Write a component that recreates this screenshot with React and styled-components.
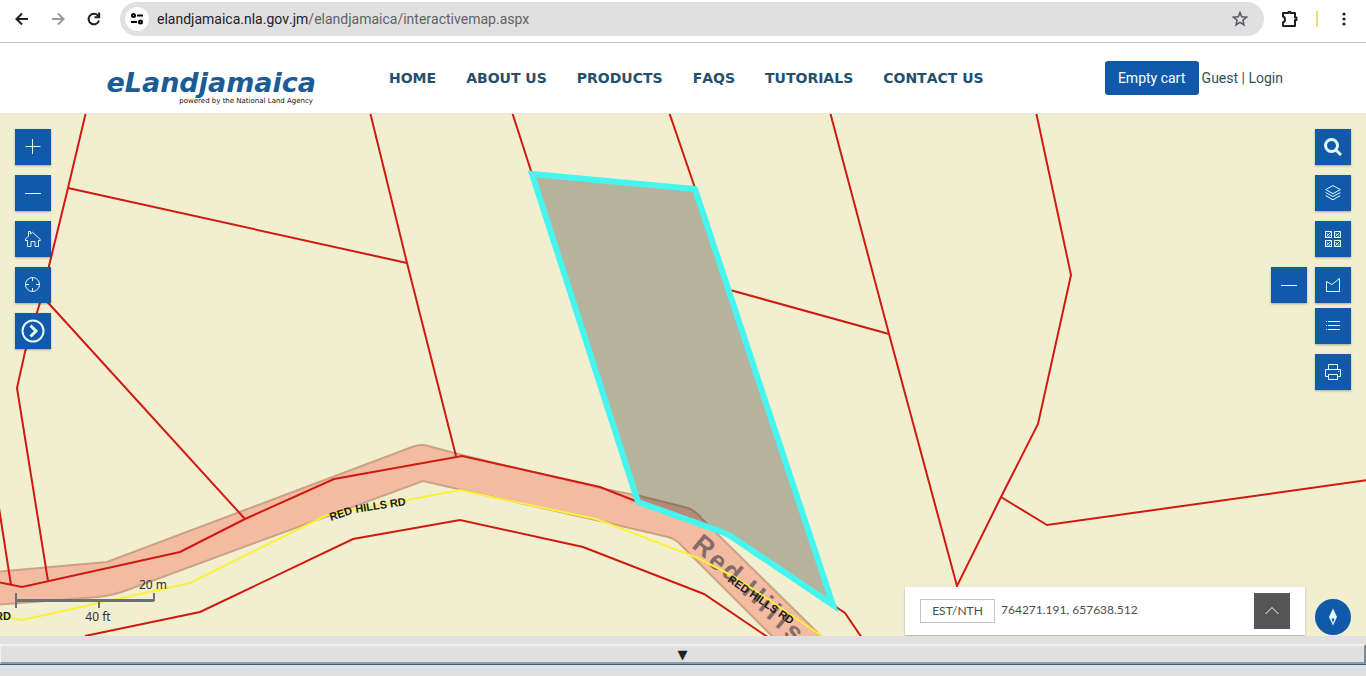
import React, { useState } from "react";
import styled, { createGlobalStyle, css } from "styled-components";

const GlobalStyle = createGlobalStyle`
  * {
    box-sizing: border-box;
  }
  body {
    margin: 0;
    background: #ffffff;
    font-family: Roboto, "Liberation Sans", sans-serif;
  }
  button {
    font-family: inherit;
    padding: 0;
    cursor: pointer;
  }
  a {
    text-decoration: none;
    color: inherit;
  }
`;

const Page = styled.div`
  display: flex;
  flex-direction: column;
  min-height: 100vh;
`;

/* browser bar */

const BrowserBar = styled.div`
  display: flex;
  align-items: center;
  height: 43px;
  padding: 0 10px 4px;
  border-bottom: 1px solid #c8c8c8;
`;

const BarButton = styled.button`
  display: flex;
  align-items: center;
  justify-content: center;
  width: 24px;
  height: 24px;
  margin-right: ${props => props.gap || 0}px;
  border: 0;
  background: none;
  color: ${props => props.tone || "#1f1f1f"};
`;

const AddressBar = styled.div`
  display: flex;
  flex: 1;
  align-items: center;
  height: 34px;
  margin-right: 14px;
  padding: 0 12px 0 5px;
  border-radius: 17px;
  background: #e0e0e0;
`;

const SiteInfo = styled.button`
  display: flex;
  align-items: center;
  justify-content: center;
  width: 24px;
  height: 24px;
  margin-right: 8px;
  border: 0;
  border-radius: 50%;
  background: #ffffff;
`;

const Address = styled.input`
  position: absolute;
  inset: 0;
  width: 100%;
  border: 0;
  outline: 0;
  background: none;
  color: transparent;
  font: 14px Roboto, sans-serif;
`;

const AddressField = styled.label`
  position: relative;
  flex: 1;
  color: #5f6368;
  font-size: 14px;
  font-kerning: none;
  line-height: 20px;
`;

const Domain = styled.span`
  color: #202124;
`;

const Divider = styled.span`
  width: 2px;
  height: 16px;
  margin: 0 14px 0 1px;
  background: #f3dc6c;
`;

/* site header */

const Header = styled.header`
  display: flex;
  align-items: center;
  height: 71px;
  padding: 0 83px 0 107px;
  border-bottom: 1px solid #e6e6de;
`;

const Logo = styled.a`
  display: flex;
  flex-direction: column;
  align-items: flex-end;
  width: 209px;
  padding-top: 18px;
  color: #1b5c97;
  font-family: "DejaVu Sans", sans-serif;
  font-size: 27px;
  font-style: italic;
  font-weight: bold;
  line-height: 28px;
  white-space: nowrap;
`;

const Tagline = styled.span`
  padding-right: 3px;
  color: #111111;
  font-size: 7px;
  font-style: normal;
  font-weight: normal;
  line-height: 8px;
`;

const Nav = styled.nav`
  display: flex;
  flex: 1;
  gap: 30px;
  margin-left: 73px;
  color: #254f6b;
  font-family: "DejaVu Sans", sans-serif;
  font-size: 14px;
  font-kerning: none;
  font-weight: bold;
  line-height: 20px;
  white-space: nowrap;
`;

const Account = styled.div`
  display: flex;
  align-items: center;
  gap: 3px;
  color: #2f4f66;
  font-size: 14px;
  white-space: nowrap;
`;

const CartButton = styled.button`
  width: 94px;
  height: 34px;
  border: 0;
  border-radius: 3px;
  background: #115aaa;
  color: #ffffff;
  font-size: 14px;
`;

/* map */

const MapArea = styled.main`
  position: relative;
  display: flex;
  flex: 1;
  justify-content: space-between;
  min-height: 522px;
  padding: 15px 15px 0;
  overflow: hidden;
  background: #f2efd0;
`;

const MapCanvas = styled.svg`
  position: absolute;
  inset: 0;
  width: 100%;
  height: 100%;
`;

const Side = styled.div`
  position: relative;
  display: flex;
  flex-direction: column;
  justify-content: space-between;
  align-items: ${props => (props.right ? "flex-end" : "flex-start")};
`;

const Tools = styled.div`
  display: flex;
  flex-direction: column;
  align-items: flex-end;
  gap: 10px;
`;

const ToolGroup = styled.div`
  display: flex;
  flex-direction: column;
  align-items: flex-end;
  gap: 5px;
`;

const ToolRow = styled.div`
  display: flex;
  gap: 8px;
`;

const ToolButton = styled.button`
  display: flex;
  align-items: center;
  justify-content: center;
  width: 36px;
  height: 36px;
  border: 0;
  background: #115aaa;
  color: #e4fbff;
  box-shadow: 0 1px 2px rgba(0, 0, 0, 0.3);
  ${props =>
    props.dark &&
    css`
      background: #555555;
      color: #ffffff;
      box-shadow: none;
    `}
  ${props =>
    props.round &&
    css`
      border-radius: 50%;
      box-shadow: none;
    `}
`;

const ScaleBar = styled.div`
  width: 154px;
  padding-bottom: 11px;
  color: #323232;
  font-family: "Noto Sans", sans-serif;
  font-size: 12px;
  line-height: 16px;
`;

const ScaleTop = styled.div`
  text-align: right;
  padding-right: 2px;
`;

const ScaleBottom = styled.div`
  width: 166px;
  text-align: center;
`;

const ScaleLine = styled.svg`
  display: block;
`;

const BottomRow = styled.div`
  display: flex;
  align-items: flex-end;
  gap: 10px;
  padding-bottom: 1px;
`;

const Coordinates = styled.div`
  display: flex;
  align-items: center;
  width: 400px;
  height: 48px;
  padding: 0 15px;
  background: #ffffff;
  box-shadow: 0 1px 2px rgba(0, 0, 0, 0.3);
  color: #4c4c4c;
  font-family: Lato, sans-serif;
  font-size: 12px;
`;

const CoordinateType = styled.button`
  width: 75px;
  height: 24px;
  margin-right: 6px;
  padding-bottom: 2px;
  border: 1px solid #c4c4c4;
  background: #ffffff;
  color: #4c4c4c;
  font-size: 12px;
`;

const CoordinateValue = styled.span`
  flex: 1;
  padding-bottom: 3px;
`;

/* bottom panel */

const Footer = styled.footer`
  height: 40px;
  padding-top: 8px;
  background: linear-gradient(#e0e0e0 29px, #d6e1ea 29px, #e0e0e0 38px);
`;

const PanelToggle = styled.button`
  display: block;
  width: 100%;
  height: 20px;
  border: solid;
  border-width: 2px 2px 2px 1px;
  border-color: #f0f0f0 #7f8a92 #8f9ba3 #f0f0f0;
  box-shadow: 0 1px #3f5a70;
  background: #e0e0e0;
  color: #222222;
  font-family: "DejaVu Sans", sans-serif;
  font-size: 13px;
  line-height: 18px;
`;

const roadTop =
  "M-5 572 L107 562 L412 447 Q422 443 432 447 L462 455 L600 488 L640 496 L688 508 Q696 511 702 519 L822 637";
const roadBottom =
  "M-5 605 L98 597 Q115 595 130 589 L423 481 L600 521 L668 537 Q676 539 681 545 L773 637";
const roadFill =
  "M-5 572 L107 562 L412 447 Q422 443 432 447 L462 455 L600 488 L640 496 L688 508 Q696 511 702 519 L822 637 L773 637 L681 545 Q676 539 668 537 L600 521 L423 481 L130 589 Q115 595 98 597 L-5 605 Z";

const boundaries = [
  "M86 112 L68 188 L49 266 L42 296 L25 352 L17 388 L48 581",
  "M68 188 L407 263",
  "M42 296 L245 519",
  "M370 112 L407 263 L456 456",
  "M-2 582 L22 587 L180 552 L245 519 L334 479 L462 456 L600 487 L638 502",
  "M-1 508 L11 585",
  "M85 636 L200 612 L353 539 L460 520 L583 547 L704 594 L769 638",
  "M512 112 L532 174",
  "M669 112 L695 188",
  "M730 290 L889 334",
  "M830 112 L889 334 L957 586 L1001 497 L1038 424 L1071 275 L1036 112",
  "M1001 497 L1047 525 L1368 480",
  "M833 605 L845 613 L862 638"
];

const roadLetters = [
  ["R", 704, 546],
  ["e", 718, 561],
  ["d", 732, 572],
  ["H", 754, 592],
  ["i", 766, 604],
  ["l", 774, 612],
  ["l", 783, 621],
  ["s", 794, 632]
];

const Map = () => (
  <MapCanvas viewBox="0 114 1366 522" preserveAspectRatio="xMidYMid slice">
    <path d={roadFill} fill="#f3bba1" />
    <path d={roadTop} fill="none" stroke="#caa384" strokeWidth="2" />
    <path d={roadBottom} fill="none" stroke="#caa384" strokeWidth="2" />
    <g
      fill="#826c67"
      fontFamily="Liberation Sans, sans-serif"
      fontSize="27"
      fontWeight="bold"
      textAnchor="middle"
    >
      {roadLetters.map(([letter, x, y], index) => (
        <text key={index} transform={`translate(${x} ${y}) rotate(40)`} y="9">
          {letter}
        </text>
      ))}
    </g>
    <path
      d="M-2 616 L22 620 L190 583 L327 515 L460 490 L596 519 L698 558 L735 577 L822 636"
      fill="none"
      stroke="#fbf03c"
      strokeWidth="2"
    />
    <g fill="none" stroke="#cf1a12" strokeWidth="2">
      {boundaries.map(d => (
        <path key={d} d={d} />
      ))}
    </g>
    <path
      d="M532 174 L695 189 L833 605 L735 539 Q730 535 722 532 L638 502 Z"
      fill="rgba(0, 0, 0, 0.25)"
      stroke="#46f6ee"
      strokeWidth="6"
    />
    <path id="label-west" d="M331 521 L354 513 L420 503" fill="none" />
    <path id="label-east" d="M727 581 L810 638" fill="none" />
    <g
      fill="#1c1b12"
      fontFamily="Liberation Sans, sans-serif"
      fontSize="11"
      fontWeight="bold"
    >
      <text>
        <textPath href="#label-west">RED HILLS RD</textPath>
      </text>
      <text>
        <textPath href="#label-east">RED HILLS RD</textPath>
      </text>
      <text x="-5" y="620">
        RD
      </text>
    </g>
  </MapCanvas>
);

const Icon = ({ size = 16, width = 1, children }) => (
  <svg
    width={size}
    height={size}
    viewBox={`0 0 ${size} ${size}`}
    fill="none"
    stroke="currentColor"
    strokeWidth={width}
    aria-hidden="true"
  >
    {children}
  </svg>
);

const PlusIcon = () => (
  <Icon>
    <path d="M.5 7.5h15M7.5 0v15" />
  </Icon>
);

const MinusIcon = () => (
  <Icon>
    <path d="M0 8.500h16" />
  </Icon>
);

const HomeIcon = () => (
  <Icon>
    <path d="M.5 8 3.500 5V.5h2V3l2-1.700L15.300 8.500v1H13.500v6H10v-5H6v5H2.500v-6H.5z" />
  </Icon>
);

const LocateIcon = () => (
  <Icon>
    <circle cx="7.500" cy="7.500" r="7" />
    <path d="M7.500 0v4M7.500 11v4M0 7.500h4M11 7.500h4" />
  </Icon>
);

const ExpandIcon = () => (
  <Icon size={24} width={2}>
    <circle cx="12" cy="12" r="10.500" />
    <path d="m9.500 6.500 5.500 5.500-5.500 5.500" strokeWidth="3" />
  </Icon>
);

const SearchIcon = () => (
  <Icon size={18} width={3}>
    <circle cx="7.500" cy="7.500" r="6" />
    <path d="m11.500 11.500 5.500 5.500" />
  </Icon>
);

const LayersIcon = () => (
  <Icon>
    <path d="m8 .6 7.300 4L8 8.700.7 4.600zM.7 7.500 8 11.600l7.300-4.100M.7 10.500 8 14.800l7.300-4.300" />
  </Icon>
);

const BasemapIcon = () => (
  <Icon size={17}>
    {[[0.5, 0.5], [9.5, 0.5], [0.5, 9.5], [9.5, 9.5]].map(([x, y], index) => (
      <g key={index} transform={`translate(${x} ${y})`}>
        <path d="M0 0h6v6H0zM1 5l4-4M1 2l1.500 1M3 5l2-1" />
        <path d="M0 0h6v6H0z" />
      </g>
    ))}
  </Icon>
);

const PolygonIcon = () => (
  <Icon>
    <path d="M1.500 4.500 7 7.500 14.500 1.500v13h-13z" />
  </Icon>
);

const LegendIcon = () => (
  <Icon>
    <path d="M3 3.500h12M3 7.500h12M3 11.500h12M1 3.500h1M1 7.500h1M1 11.500h1" />
  </Icon>
);

const PrintIcon = () => (
  <Icon>
    <path d="M3.500 5.500v-5h9v5M3.500 12.500h-3v-7h15v7h-3M3.500 10.500h9v5h-9zM13 7.500h1" />
  </Icon>
);

const CompassIcon = () => (
  <Icon size={18}>
    <path d="M9 .5 13 9 9 17.500 5 9z" fill="currentColor" stroke="none" />
    <path d="M7.500 10.500h3L9 15z" fill="#115aaa" stroke="none" />
  </Icon>
);

const ArrowIcon = ({ flip }) => (
  <Icon width={2}>
    <path d={flip ? "M2 8h11M8 2.500 13.500 8 8 13.500" : "M14 8H3M8 2.500 2.500 8 8 13.500"} />
  </Icon>
);

const links = [
  "HOME",
  "ABOUT US",
  "PRODUCTS",
  "FAQS",
  "TUTORIALS",
  "CONTACT US"
];

const App = () => {
  const [url, setUrl] = useState("");

  return (
    <Page>
      <GlobalStyle />
      <BrowserBar>
        <BarButton aria-label="Back" gap={12}>
          <ArrowIcon />
        </BarButton>
        <BarButton aria-label="Forward" gap={12} tone="#9b9b9b">
          <ArrowIcon flip />
        </BarButton>
        <BarButton aria-label="Reload" gap={14}>
          <Icon width={2}>
            <path d="M13 9.500A5.300 5.300 0 1 1 11.800 4.400L13 5.600" />
            <path d="M13.200 1.500v4.700H8.500" />
          </Icon>
        </BarButton>
        <AddressBar>
          <SiteInfo aria-label="Site information">
            <Icon width={2}>
              <circle cx="4.500" cy="4.500" r="1.500" />
              <circle cx="11.500" cy="11" r="1.500" />
              <path d="M8 4.500h6M2 11h6" />
            </Icon>
          </SiteInfo>
          <AddressField>
            {!url && (
              <>
                <Domain>elandjamaica.nla.gov.jm</Domain>
                /elandjamaica/interactivemap.aspx
              </>
            )}
            {url}
            <Address
              aria-label="Address"
              value={url}
              onChange={e => setUrl(e.target.value)}
            />
          </AddressField>
          <BarButton aria-label="Bookmark" tone="#55585c">
            <Icon width={1.5}>
              <path d="m8 1.500 1.800 4.300 4.700.4-3.600 3.100 1.100 4.600L8 11.400l-4 2.500 1.100-4.600L1.500 6.200l4.700-.4z" />
            </Icon>
          </BarButton>
        </AddressBar>
        <BarButton aria-label="Extensions" gap={13}>
          <Icon size={20} width={2}>
            <path
              d="M3 4h5.500V3h2v1H15v4.500h1.500v2.500H15V17H3v-3.500q2-.5 2-3T3 7.500z"
              strokeLinejoin="round"
            />
          </Icon>
        </BarButton>
        <Divider />
        <BarButton aria-label="Menu">
          <Icon>
            <g fill="currentColor" stroke="none">
              <circle cx="8" cy="3" r="1.600" />
              <circle cx="8" cy="8" r="1.600" />
              <circle cx="8" cy="13" r="1.600" />
            </g>
          </Icon>
        </BarButton>
      </BrowserBar>

      <Header>
        <Logo href="#">
          eLandjamaica
          <Tagline>powered by the National Land Agency</Tagline>
        </Logo>
        <Nav>
          {links.map(link => (
            <a key={link} href="#">
              {link}
            </a>
          ))}
        </Nav>
        <Account>
          <CartButton>Empty cart</CartButton>
          <span>
            Guest | <a href="#">Login</a>
          </span>
        </Account>
      </Header>

      <MapArea>
        <Map />
        <Side>
          <Tools>
            <ToolButton aria-label="Zoom in">
              <PlusIcon />
            </ToolButton>
            <ToolButton aria-label="Zoom out">
              <MinusIcon />
            </ToolButton>
            <ToolButton aria-label="Home">
              <HomeIcon />
            </ToolButton>
            <ToolButton aria-label="Locate">
              <LocateIcon />
            </ToolButton>
            <ToolButton aria-label="Expand">
              <ExpandIcon />
            </ToolButton>
          </Tools>
          <ScaleBar>
            <ScaleTop>20 m</ScaleTop>
            <ScaleLine width="140" height="16" stroke="#707070" strokeWidth="2" fill="none">
              <path d="M1 0v15M139 8V0M84 8v7" />
              <path d="M1 7.5h138" strokeWidth="3" />
            </ScaleLine>
            <ScaleBottom>40 ft</ScaleBottom>
          </ScaleBar>
        </Side>
        <Side right>
          <Tools>
            <ToolButton aria-label="Search">
              <SearchIcon />
            </ToolButton>
            <ToolButton aria-label="Layers">
              <LayersIcon />
            </ToolButton>
            <ToolButton aria-label="Basemaps">
              <BasemapIcon />
            </ToolButton>
            <ToolGroup>
              <ToolRow>
                <ToolButton aria-label="Collapse">
                  <MinusIcon />
                </ToolButton>
                <ToolButton aria-label="Draw polygon">
                  <PolygonIcon />
                </ToolButton>
              </ToolRow>
              <ToolButton aria-label="Legend">
                <LegendIcon />
              </ToolButton>
            </ToolGroup>
            <ToolButton aria-label="Print">
              <PrintIcon />
            </ToolButton>
          </Tools>
          <BottomRow>
            <Coordinates>
              <CoordinateType>EST/NTH</CoordinateType>
              <CoordinateValue>764271.191, 657638.512</CoordinateValue>
              <ToolButton aria-label="More" dark>
                <Icon>
                  <path d="m1.500 11 6.500-6.500 6.500 6.500" />
                </Icon>
              </ToolButton>
            </Coordinates>
            <ToolButton aria-label="Compass" round>
              <CompassIcon />
            </ToolButton>
          </BottomRow>
        </Side>
      </MapArea>

      <Footer>
        <PanelToggle aria-label="Toggle panel">▼</PanelToggle>
      </Footer>
    </Page>
  );
};

export default App;
